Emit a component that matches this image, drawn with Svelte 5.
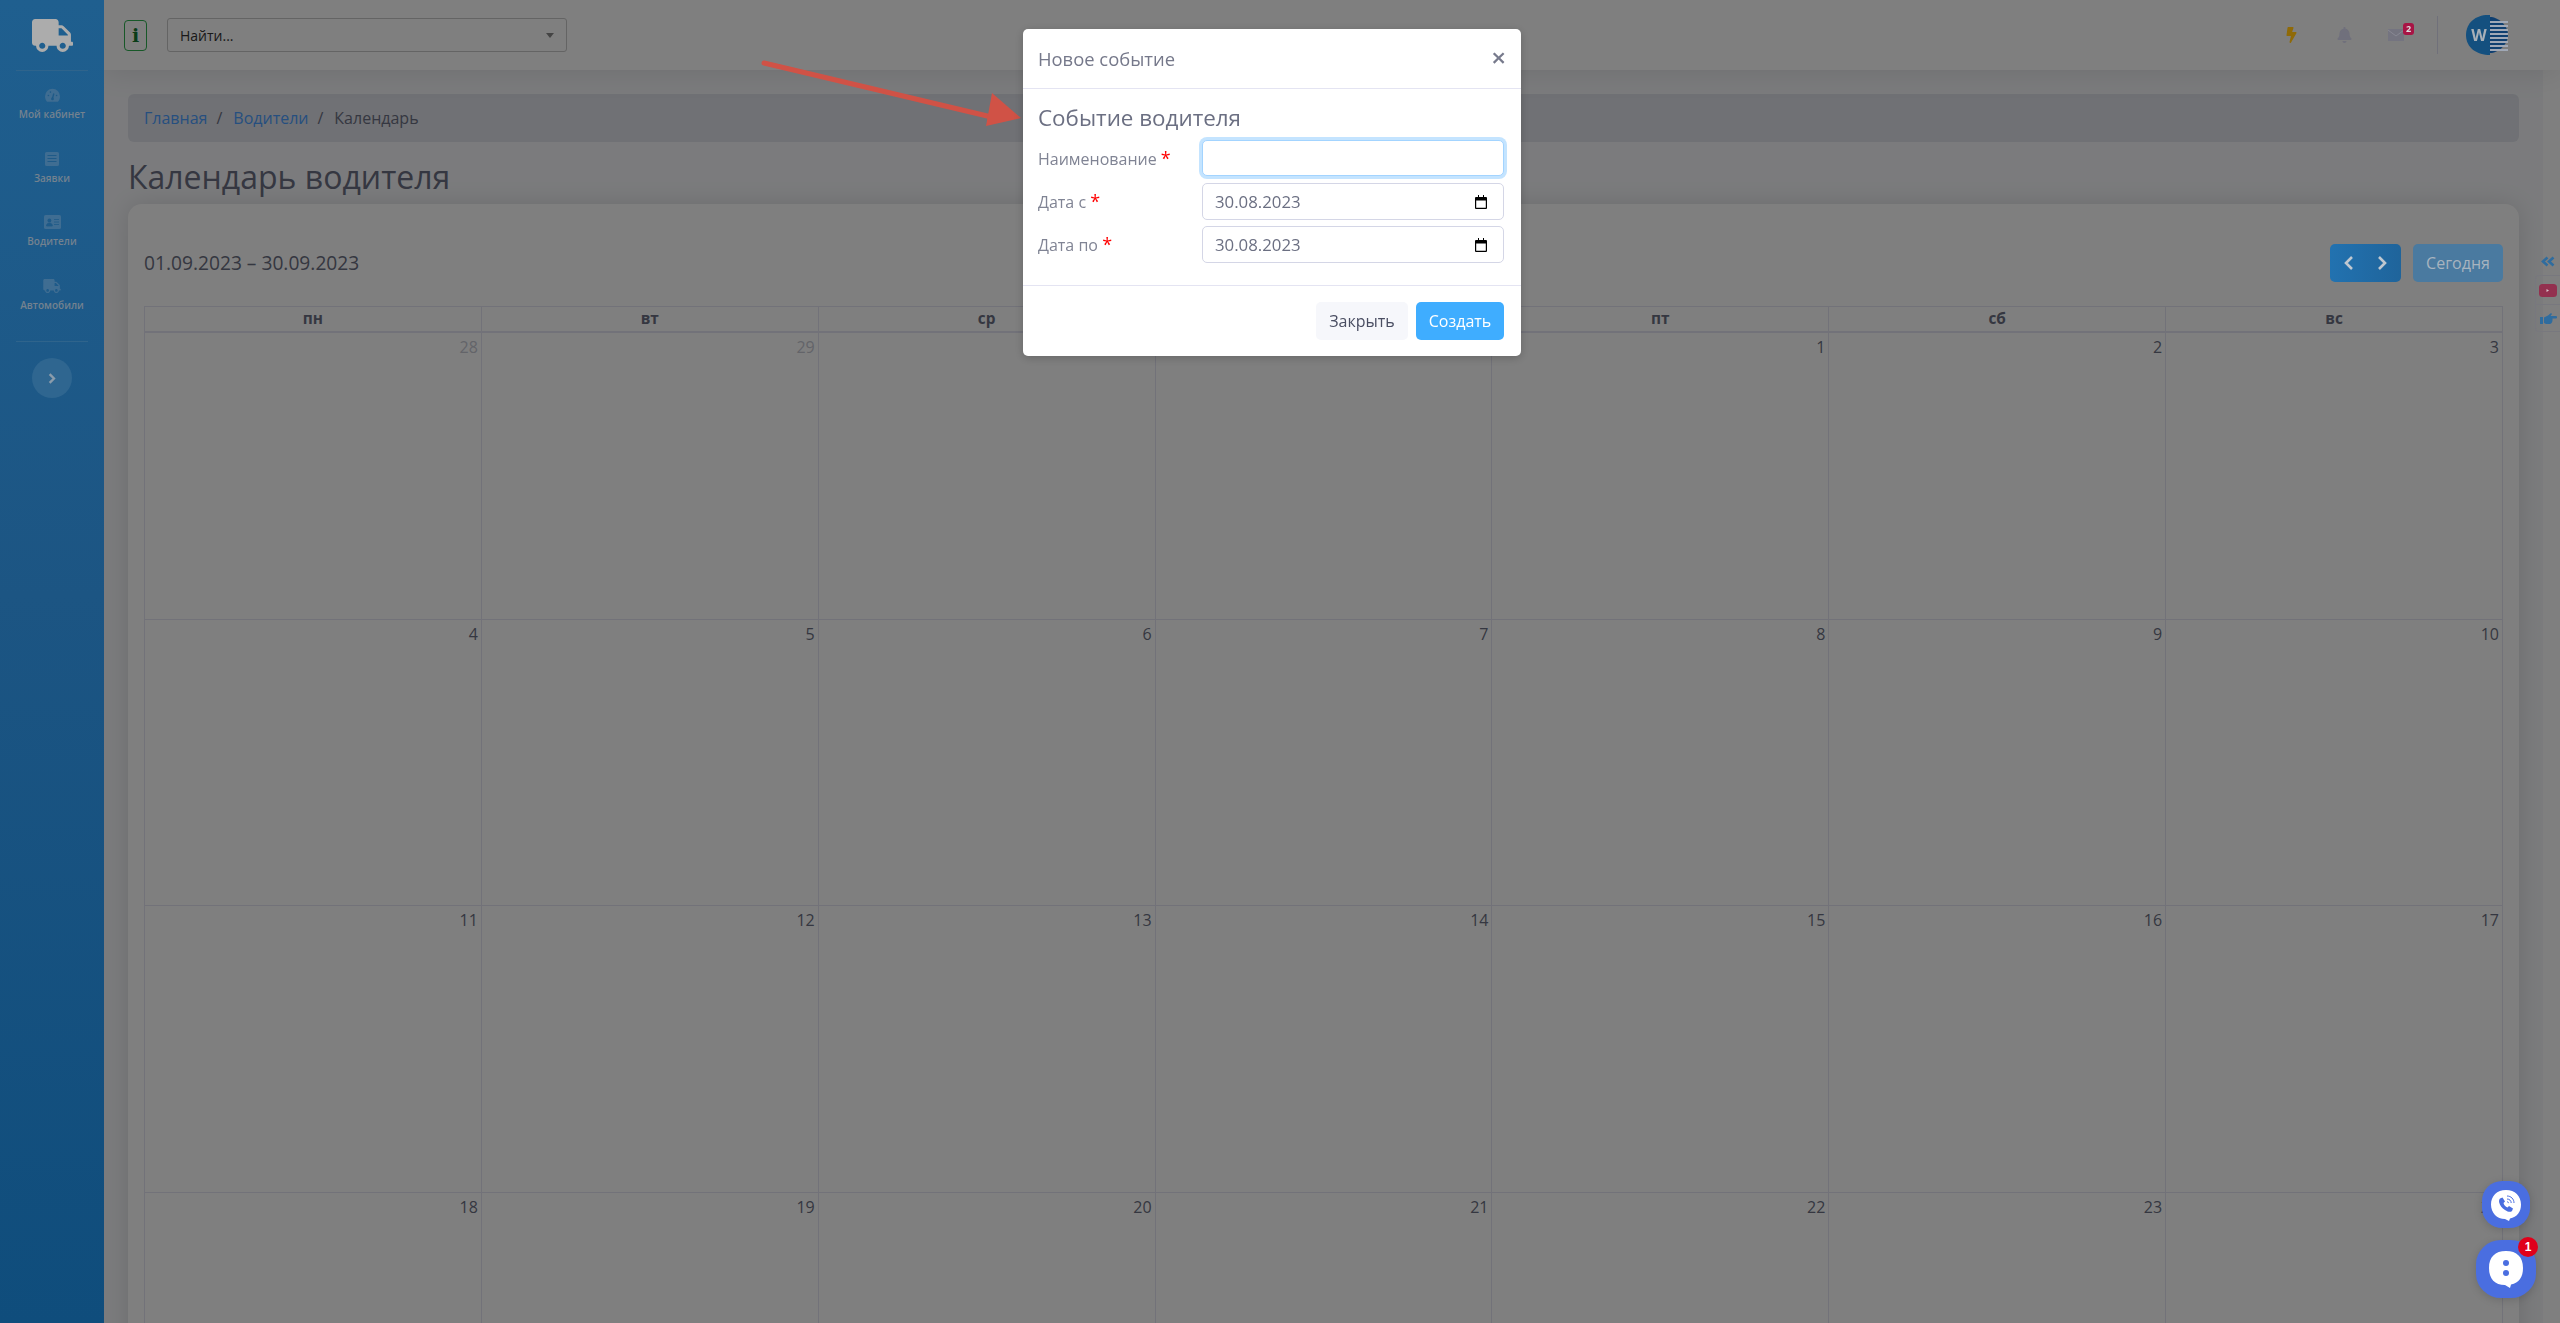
<script>
  const nav = [
    { label: 'Мой кабинет', icon: 'gauge' },
    { label: 'Заявки', icon: 'list' },
    { label: 'Водители', icon: 'card' },
    { label: 'Автомобили', icon: 'truck' }
  ];
  const weekdays = ['пн', 'вт', 'ср', 'чт', 'пт', 'сб', 'вс'];
  const days = [
    28, 29, 30, 31, 1, 2, 3,
    4, 5, 6, 7, 8, 9, 10,
    11, 12, 13, 14, 15, 16, 17,
    18, 19, 20, 21, 22, 23, 24
  ];
  const stripes = [8, 12, 16, 20, 24, 28, 32, 36];
  const truck = 'M624 352h-16V243.9c0-12.7-5.1-24.9-14.1-33.9L494 110.1c-9-9-21.2-14.1-33.9-14.1H416V48c0-26.5-21.5-48-48-48H48C21.5 0 0 21.5 0 48v320c0 26.5 21.5 48 48 48h16c0 53 43 96 96 96s96-43 96-96h128c0 53 43 96 96 96s96-43 96-96h48c8.8 0 16-7.2 16-16v-32c0-8.8-7.2-16-16-16zM160 464c-26.5 0-48-21.5-48-48s21.5-48 48-48 48 21.5 48 48-21.5 48-48 48zm320 0c-26.5 0-48-21.5-48-48s21.5-48 48-48 48 21.5 48 48-21.5 48-48 48zm80-208H416V144h44.1l99.9 99.9V256z';
</script>

<div class="page">
  <aside class="sidebar">
    <div class="logo">
      <svg viewBox="0 0 640 512" width="41" height="33"><path d={truck} fill="#acacac" /></svg>
    </div>
    <nav>
      {#each nav as item}
        <a class="nav-item" href="#top">
          <span class="nav-icon">
            {#if item.icon === 'gauge'}
              <svg viewBox="0 0 24 22" width="17" height="15">
                <path d="M12 1a11 11 0 0 0-11 11c0 3 1 6 3 8h16c2-2 3-5 3-8A11 11 0 0 0 12 1z" fill="currentColor" />
                <path d="M12 15l2-7" stroke="#1e5a88" stroke-width="2" />
                <circle cx="12" cy="16" r="2" fill="#1e5a88" />
                <circle cx="6" cy="11" r="1.2" fill="#1e5a88" />
                <circle cx="18" cy="11" r="1.2" fill="#1e5a88" />
                <circle cx="9" cy="6" r="1.2" fill="#1e5a88" />
              </svg>
            {:else if item.icon === 'list'}
              <svg viewBox="0 0 14 14" width="14" height="14">
                <path d="M1.5 0h11A1.5 1.5 0 0 1 14 1.5v11a1.5 1.5 0 0 1-1.5 1.5h-11A1.5 1.5 0 0 1 0 12.500v-11A1.500 1.500 0 0 1 1.500 0z" fill="currentColor" />
                <path d="M2.500 3.500h9M2.500 6.500h9M2.500 9.500h9" stroke="#1e5a88" stroke-width="1" />
              </svg>
            {:else if item.icon === 'card'}
              <svg viewBox="0 0 17 14" width="17" height="14">
                <rect width="17" height="14" rx="1.500" fill="currentColor" />
                <circle cx="5.400" cy="5.400" r="1.900" fill="#1e5a88" />
                <path d="M2.500 11c0-2 1.300-3 2.900-3s2.900 1 2.900 3zM10 4.500h5M10 7h5M10 9.500h5" fill="#1e5a88" stroke="#1e5a88" stroke-width=".8" />
              </svg>
            {:else}
              <svg viewBox="0 0 640 512" width="18" height="14"><path d={truck} fill="currentColor" /></svg>
            {/if}
          </span>
          <span class="nav-label">{item.label}</span>
        </a>
      {/each}
    </nav>
    <button class="collapse" aria-label="Развернуть">
      <svg viewBox="0 0 10 14" width="8" height="11"><path d="M2 1.500L7.500 7 2 12.500" fill="none" stroke="#8b9cab" stroke-width="3" /></svg>
    </button>
  </aside>

  <div class="right">
    <header class="topbar">
      <button class="info" aria-label="Информация"><span>i</span></button>
      <div class="search">
        <span>Найти...</span>
        <i class="caret"></i>
      </div>
      <div class="top-icons">
        <svg class="bolt" viewBox="0 0 320 512" width="11" height="16"><path d="M296 160H180.600l42.600-129.800C227.200 15 215.700 0 200 0H56C44 0 33.800 8.900 32.200 20.800l-32 240C-1.700 275.200 9.500 288 24 288h118.700L96.600 482.500c-3.600 15.200 8 29.500 23.300 29.500 8.400 0 16.400-4.400 20.800-12l176-304c9.300-15.900-2.200-36-20.700-36z" fill="#8f6a08" /></svg>
        <svg class="bell" viewBox="0 0 448 512" width="15" height="16"><path d="M224 512c35.320 0 63.970-28.650 63.970-64H160.030c0 35.350 28.650 64 63.970 64zm215.390-149.710c-19.320-20.760-55.470-51.990-55.470-154.290 0-77.700-54.480-139.900-127.940-155.160V32c0-17.670-14.320-32-31.980-32s-31.980 14.330-31.980 32v20.840C118.560 68.100 64.080 130.300 64.080 208c0 102.300-36.150 133.530-55.470 154.290-6 6.450-8.660 14.160-8.610 21.710.11 16.400 12.980 32 32.100 32h383.800c19.120 0 32-15.600 32.100-32 .05-7.550-2.610-15.270-8.610-21.710z" fill="#70707c" /></svg>
        <span class="mail">
          <svg viewBox="0 0 16 12" width="16" height="12">
            <rect width="16" height="12" fill="#747480" />
            <path d="M0 1l8 6 8-6" fill="none" stroke="#8e8e98" stroke-width=".8" />
          </svg>
          <b>2</b>
        </span>
      </div>
      <div class="avatar">
        <svg viewBox="0 0 42 42" width="42" height="42">
          <path d="M24 1C11 0 0 8 0 21s11 20 24 20z" fill="#14507f" />
          <path d="M24 3c8 0 18 8 18 18s-10 18-18 18z" fill="#0f3f70" />
          {#each stripes as y}
            <path d="M24 {y}h18" stroke="#a0a8b6" stroke-width="2" />
          {/each}
          <text x="13" y="27" class="word">W</text>
        </svg>
      </div>
    </header>

    <div class="below">
      <main class="content">
        <div class="breadcrumb">
          <a href="#top">Главная</a><span class="sep">/</span>
          <a href="#top">Водители</a><span class="sep">/</span>
          <span>Календарь</span>
        </div>
        <h1>Календарь водителя</h1>
        <section class="card">
          <div class="toolbar">
            <span class="range">01.09.2023 – 30.09.2023</span>
            <div class="tools">
              <div class="pager">
                <svg viewBox="0 0 10 16" width="10" height="16"><path d="M8 2L2 8l6 6" fill="none" stroke="#c0c8d0" stroke-width="2.600" /></svg>
                <svg viewBox="0 0 10 16" width="10" height="16"><path d="M2 2l6 6-6 6" fill="none" stroke="#c0c8d0" stroke-width="2.600" /></svg>
              </div>
              <button class="today">Сегодня</button>
            </div>
          </div>
          <div class="calendar">
            {#each weekdays as day}
              <div class="head">{day}</div>
            {/each}
            {#each days as day, i}
              <div class="cell" class:muted={i < 4}>{day}</div>
            {/each}
          </div>
        </section>
      </main>
      <div class="strip"></div>
    </div>
  </div>

  <div class="side-tabs">
    <svg class="tabs-toggle" viewBox="0 0 14 10" width="14" height="11"><path d="M6.500 1L2 5l4.500 4M12.500 1L8 5l4.500 4" fill="none" stroke="#2f6c9e" stroke-width="2.600" /></svg>
    <div class="tabs-box">
      <span class="tab">
        <svg viewBox="0 0 18 13" width="18" height="13"><rect width="18" height="13" rx="3.500" fill="#93304f" /><path d="M7.500 5l2.500 1.500-2.500 1.500z" fill="#d5c0c8" /></svg>
      </span>
      <span class="tab">
        <svg viewBox="0 0 17 13" width="17" height="13"><path d="M0 5h3v7H0zM4 5.500l4-2L11 1l1 1-1.500 2H16a1 1 0 0 1 0 2.400h-3.500v1.600c0 2-1 4-3 4H6l-2-1z" fill="#2f6c9e" /></svg>
      </span>
    </div>
  </div>

  <div class="overlay"></div>

  <svg class="arrow" viewBox="0 0 270 70" width="270" height="70">
    <path d="M4 4L240 60" stroke="#d05246" stroke-width="5" stroke-linecap="round" fill="none" />
    <path d="M232 34L261 59 226 67z" fill="#d05246" />
  </svg>

  <div class="modal">
    <div class="modal-head">
      <span>Новое событие</span>
      <button class="close" aria-label="Закрыть">×</button>
    </div>
    <div class="modal-body">
      <h2>Событие водителя</h2>
      <div class="row">
        <label for="name">Наименование <em>*</em></label>
        <input id="name" class="field focused" type="text" />
      </div>
      <div class="row">
        <label for="from">Дата с <em>*</em></label>
        <div class="date">
          <input id="from" class="field" type="text" value="30.08.2023" />
          <svg viewBox="0 0 12 14" width="12" height="14"><path d="M1 2h2V0h1v2h4V0h1v2h2a1 1 0 0 1 1 1v10a1 1 0 0 1-1 1H1a1 1 0 0 1-1-1V3a1 1 0 0 1 1-1zm.2 3.500v7.300h9.600V5.500z" fill="#000" /></svg>
        </div>
      </div>
      <div class="row">
        <label for="to">Дата по <em>*</em></label>
        <div class="date">
          <input id="to" class="field" type="text" value="30.08.2023" />
          <svg viewBox="0 0 12 14" width="12" height="14"><path d="M1 2h2V0h1v2h4V0h1v2h2a1 1 0 0 1 1 1v10a1 1 0 0 1-1 1H1a1 1 0 0 1-1-1V3a1 1 0 0 1 1-1zm.2 3.500v7.300h9.600V5.500z" fill="#000" /></svg>
        </div>
      </div>
    </div>
    <div class="modal-foot">
      <button class="btn ghost">Закрыть</button>
      <button class="btn primary">Создать</button>
    </div>
  </div>

  <div class="widget">
    <span class="bubble small">
      <svg viewBox="0 0 32 32" width="32" height="32">
        <path d="M16 1C7 1 1 7 1 15.500 1 24 7 30 15 30l4 2 1-2.500C27 28 31 23 31 15.500 31 7 25 1 16 1z" fill="#fff" />
        <path d="M10 9.500l2.500-1 2.500 4-1.500 1.500c.5 2 2 3.500 4 4.500l1.500-1.500 4 2.500-1 2.500c-1.500 1.500-4 1-7-1s-5-4.500-5.800-7.500c-.4-1.800 0-3 .8-4z" fill="#4a6ee0" />
        <path d="M17 7c4 0 7 3 7 7M17 10c2.500 0 4.200 1.700 4.200 4M17 12.800c1 0 1.500.5 1.500 1.300" fill="none" stroke="#4a6ee0" stroke-width="1" />
      </svg>
    </span>
    <span class="bubble large">
      <svg viewBox="0 0 36 38" width="36" height="38">
        <path d="M18 1C7 1 1 7 1 18c0 11 6 17 16 17l5 3 1-3.400C31 33 35 27 35 18 35 7 29 1 18 1z" fill="#fff" />
        <circle cx="18" cy="13" r="3" fill="#4a6ee0" />
        <circle cx="18" cy="23" r="3" fill="#4a6ee0" />
      </svg>
      <b class="count">1</b>
    </span>
  </div>
</div>

<style>
  :global(body) {
    margin: 0;
    overflow: hidden;
  }

  * {
    box-sizing: border-box;
  }

  .page {
    display: flex;
    height: 1323px;
    overflow: hidden;
    font-family: "Open Sans", sans-serif;
    font-size: 16px;
    color: #6b6f82;
    background: #fff;
  }

  button {
    font-family: inherit;
    border: 0;
    padding: 0;
  }

  a {
    text-decoration: none;
  }

  /* the sidebar and a few bright bits stay above the backdrop, colours are final */
  .sidebar {
    position: relative;
    z-index: 2;
    width: 104px;
    flex: none;
    padding: 0 16px;
    display: flex;
    flex-direction: column;
    align-items: center;
    background: linear-gradient(180deg, #1f5f8f 0%, #1c5583 45%, #0f4d7c 100%);
    color: #3f6d92;
  }

  .logo {
    width: 72px;
    height: 71px;
    flex: none;
    padding-top: 1px;
    display: flex;
    align-items: center;
    justify-content: center;
    border-bottom: 1px solid #2f648c;
  }

  nav {
    width: 72px;
    height: 271px;
    flex: none;
    padding-top: 16px;
    border-bottom: 1px solid #2f648c;
  }

  .nav-item {
    height: 63.700px;
    display: flex;
    flex-direction: column;
    align-items: center;
    color: inherit;
    white-space: nowrap;
  }

  .nav-icon {
    height: 16px;
    display: flex;
    align-items: center;
  }

  .nav-label {
    margin-top: 4px;
    font-size: 10px;
    font-weight: 600;
    line-height: 15px;
    color: #74828f;
  }

  .collapse {
    width: 40px;
    height: 40px;
    margin-top: 16px;
    flex: none;
    border-radius: 50%;
    background: #2f6690;
    display: flex;
    align-items: center;
    justify-content: center;
  }

  .right {
    flex: 1;
    min-width: 0;
    display: flex;
    flex-direction: column;
  }

  .topbar {
    height: 70px;
    flex: none;
    padding: 0 52px 0 20px;
    display: flex;
    align-items: center;
    background: #fff;
    box-shadow: 0 2px 30px rgba(0, 0, 0, 0.1);
    position: relative;
  }

  .info {
    width: 23px;
    height: 31px;
    border: 1px solid #2fb050;
    border-radius: 4px;
    background: #fff;
    color: #157a30;
    font-family: "DejaVu Serif", serif;
    font-weight: 700;
    font-size: 19px;
    line-height: 27px;
  }

  .search {
    width: 400px;
    height: 34px;
    margin-left: 20px;
    padding: 0 12px;
    display: flex;
    align-items: center;
    justify-content: space-between;
    border: 1px solid #c8c8c8;
    border-radius: 3px;
    font-size: 14px;
    color: #333;
  }

  .caret {
    border-left: 4px solid transparent;
    border-right: 4px solid transparent;
    border-top: 5px solid #888;
  }

  .top-icons {
    position: relative;
    z-index: 2;
    margin-left: auto;
    height: 38px;
    padding-right: 33px;
    display: flex;
    align-items: center;
    gap: 38px;
    border-right: 1px solid #70707a;
  }

  .bell {
    margin: 0 -2px 0 2px;
  }

  .mail {
    position: relative;
    display: flex;
  }

  .mail b {
    position: absolute;
    top: -6px;
    right: -10px;
    width: 11px;
    height: 12px;
    border-radius: 3px;
    background: #a81445;
    color: #ddd;
    font-size: 9px;
    line-height: 12px;
    text-align: center;
  }

  .avatar {
    position: relative;
    z-index: 2;
    margin-left: 28px;
    display: flex;
  }

  .word {
    font-family: "Open Sans", sans-serif;
    font-size: 16px;
    font-weight: 700;
    fill: #a8b0b8;
    text-anchor: middle;
  }

  .below {
    flex: 1;
    min-height: 0;
    display: flex;
  }

  .content {
    flex: 1;
    min-width: 0;
    padding: 24px 24px 0;
    background: #f6f7fa;
  }

  .strip {
    width: 17px;
    flex: none;
  }

  .breadcrumb {
    height: 48px;
    padding: 0 16px;
    display: flex;
    align-items: center;
    border-radius: 6px;
    background: #e0e2ea;
    color: #6b6f82;
    font-size: 16px;
  }

  .breadcrumb a {
    color: #4c9fff;
  }

  .sep {
    margin: 0 11px 0 9px;
  }

  h1 {
    margin: 0;
    height: 62px;
    font-size: 32px;
    font-weight: 400;
    line-height: 70px;
    color: #6b6f82;
    white-space: nowrap;
  }

  .card {
    height: 1200px;
    padding: 40px 16px 0;
    border-radius: 14px;
    background: #fff;
    box-shadow: 0 0 24px rgba(0, 0, 0, 0.12);
  }

  .toolbar {
    height: 62px;
    display: flex;
    justify-content: space-between;
    align-items: flex-start;
  }

  .range {
    font-size: 19.200px;
    line-height: 38px;
  }

  .tools {
    position: relative;
    z-index: 2;
    display: flex;
    gap: 12px;
  }

  .pager {
    width: 71px;
    height: 38px;
    padding: 0 14px;
    display: flex;
    align-items: center;
    justify-content: space-between;
    border-radius: 5px;
    background: linear-gradient(90deg, #2272b0, #1f649b);
  }

  .today {
    width: 90px;
    height: 38px;
    border-radius: 5px;
    background: #4a7aa0;
    color: #a8b4bf;
    font-size: 16px;
  }

  .calendar {
    display: grid;
    grid-template-columns: repeat(7, 1fr);
    grid-template-rows: 26px repeat(4, 286.500px);
    border-top: 1px solid #e4e4f2;
    border-left: 1px solid #e4e4f2;
  }

  .head {
    border-right: 1px solid #e4e4f2;
    border-bottom: 2px solid #e4e4f2;
    font-size: 15.400px;
    font-weight: 700;
    line-height: 24px;
    text-align: center;
  }

  .cell {
    padding: 4px 3px 0 0;
    border-right: 1px solid #e4e4f2;
    border-bottom: 1px solid #e4e4f2;
    font-size: 16px;
    line-height: 20px;
    text-align: right;
  }

  .cell.muted {
    color: #c6c8d2;
  }

  .side-tabs {
    position: absolute;
    z-index: 2;
    top: 256px;
    right: 0;
    width: 25px;
    display: flex;
    flex-direction: column;
    align-items: center;
  }

  .tabs-toggle {
    margin: 0 0 8px;
  }

  .tabs-box {
    width: 25px;
    border: 1px solid #78787e;
    border-right: 0;
    border-radius: 4px 0 0 4px;
  }

  .tab {
    height: 28px;
    display: flex;
    align-items: center;
    justify-content: center;
  }

  .tab + .tab {
    height: 27px;
    border-top: 1px solid #78787e;
  }

  .overlay {
    position: fixed;
    z-index: 1;
    inset: 0;
    background: rgba(0, 0, 0, 0.5);
  }

  .arrow {
    position: fixed;
    z-index: 2;
    left: 760px;
    top: 59px;
  }

  .modal {
    position: fixed;
    z-index: 3;
    left: 1023px;
    top: 29px;
    width: 498px;
    height: 327px;
    border-radius: 5px;
    background: #fff;
    box-shadow: 0 2px 10px rgba(0, 0, 0, 0.2);
    display: flex;
    flex-direction: column;
  }

  .modal-head {
    height: 60px;
    flex: none;
    padding: 0 15px;
    display: flex;
    align-items: center;
    justify-content: space-between;
    border-bottom: 1px solid #e4e4f2;
    font-size: 18.400px;
    color: #75788a;
  }

  .close {
    background: none;
    font-size: 26px;
    font-weight: 600;
    line-height: 26px;
    color: #777a8c;
    margin-top: -4px;
  }

  .modal-body {
    height: 197px;
    flex: none;
    padding: 15px 17px 0 15px;
    border-bottom: 1px solid #e4e4f2;
  }

  h2 {
    margin: 0 0 7.500px;
    font-size: 22.400px;
    font-weight: 400;
    line-height: 28px;
  }

  .row {
    height: 43px;
    display: flex;
    align-items: flex-start;
    justify-content: space-between;
  }

  label {
    font-size: 16px;
    line-height: 39px;
    color: #808494;
  }

  em {
    font-style: normal;
    color: #f00;
    font-size: 18px;
    line-height: 18px;
  }

  .field {
    width: 302px;
    height: 37px;
    padding: 0 12px;
    border: 1px solid #d4d6e6;
    border-radius: 5px;
    font-family: inherit;
    font-size: 16.800px;
    color: #6b6f82;
    outline: 0;
    display: block;
  }

  .field.focused {
    height: 36px;
    border-color: #a3d4ff;
    box-shadow: 0 0 0 3px #c4e4ff;
  }

  .date {
    position: relative;
  }

  .date svg {
    position: absolute;
    right: 17px;
    top: 12px;
  }

  .modal-foot {
    flex: 1;
    padding: 16px 17px 0;
    display: flex;
    justify-content: flex-end;
    gap: 8px;
  }

  .btn {
    height: 38px;
    border-radius: 5px;
    font-size: 16px;
  }

  .ghost {
    width: 92px;
    background: #f6f7fb;
    color: #4a4e62;
  }

  .primary {
    width: 88px;
    background: #3fadff;
    color: #fff;
  }

  .widget {
    position: fixed;
    z-index: 3;
    right: 24px;
    bottom: 25px;
    display: flex;
    flex-direction: column;
    align-items: center;
    gap: 12px;
  }

  .bubble {
    position: relative;
    background: #4a6ee0;
    border-radius: 42%;
    display: flex;
    align-items: center;
    justify-content: center;
    box-shadow: 0 2px 8px rgba(0, 0, 0, 0.15);
  }

  .small {
    width: 48px;
    height: 47px;
  }

  .large {
    width: 60px;
    height: 58px;
  }

  .count {
    position: absolute;
    top: -3px;
    right: -2px;
    width: 20px;
    height: 20px;
    border-radius: 50%;
    background: #e0001a;
    color: #fff;
    font-family: "Liberation Sans", sans-serif;
    font-size: 12px;
    line-height: 20px;
    text-align: center;
  }
</style>
